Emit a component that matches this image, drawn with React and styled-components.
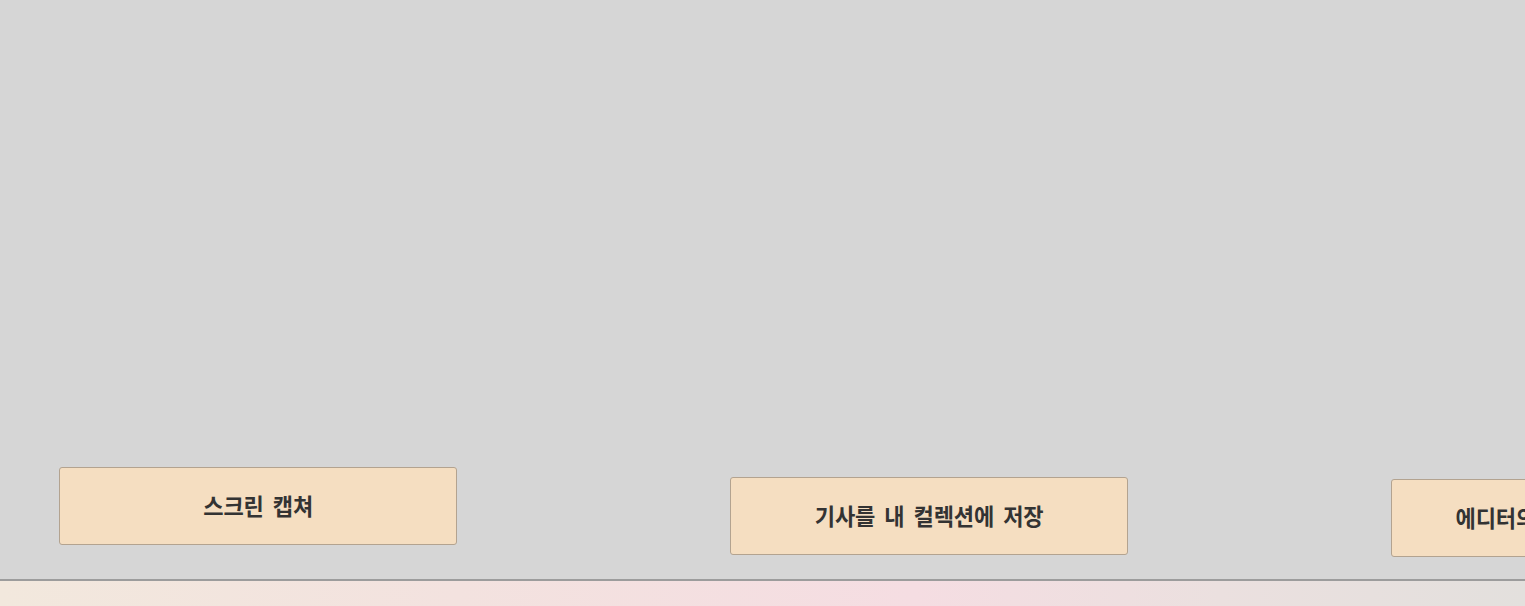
import React from "react";
import styled, { createGlobalStyle } from "styled-components";

const Global = createGlobalStyle`
  html, body { margin: 0; padding: 0; }
  body {
    background: #d6d6d6;
    overflow: hidden;
    font-family: "Noto Sans CJK KR", "Noto Sans", sans-serif;
  }
`;

const Page = styled.div`
  width: 1525px;
  height: 606px;
  display: flex;
  flex-direction: column;
  overflow: hidden;
`;

const Stage = styled.div`
  height: 581px;
  flex-shrink: 0;
  background: #d6d6d6;
  border-bottom: 2px solid #9c9c9c;
  display: flex;
  align-items: flex-start;
  padding-left: 59px;
  box-sizing: border-box;
  overflow: hidden;
`;

const Footer = styled.div`
  flex: 1;
  background: linear-gradient(90deg, #f2e8dd 0%, #f3e2df 30%, #f5dde2 60%, #ebe0df 80%, #e3e0dd 100%);
`;

const ActionButton = styled.button`
  flex-shrink: 0;
  width: 398px;
  height: 78px;
  margin-top: ${(p) => p.$top}px;
  margin-left: ${(p) => p.$left || 0}px;
  background: #f5dec1;
  border: 1px solid #b3a390;
  border-radius: 3px;
  display: flex;
  align-items: center;
  justify-content: center;
  padding: 0;
  cursor: pointer;
  white-space: nowrap;
`;

const Label = styled.span`
  display: inline-block;
  font-family: "Noto Sans CJK KR", "Noto Sans", sans-serif;
  font-weight: 700;
  font-size: 23px;
  color: #333;
  transform: translateY(-1.5px) scaleX(0.96);
  letter-spacing: -0.2px;
  word-spacing: 4.5px;
  line-height: 1;
`;

export default function App() {
  return (
    <>
      <Global />
      <Page>
        <Stage>
          <ActionButton $top={467}>
            <Label>스크린 캡쳐</Label>
          </ActionButton>
          <ActionButton $top={477} $left={273}>
            <Label>기사를 내 컬렉션에 저장</Label>
          </ActionButton>
          <ActionButton $top={479} $left={263}>
            <Label>에디터의 추천 기사 모아보기</Label>
          </ActionButton>
        </Stage>
        <Footer />
      </Page>
    </>
  );
}
